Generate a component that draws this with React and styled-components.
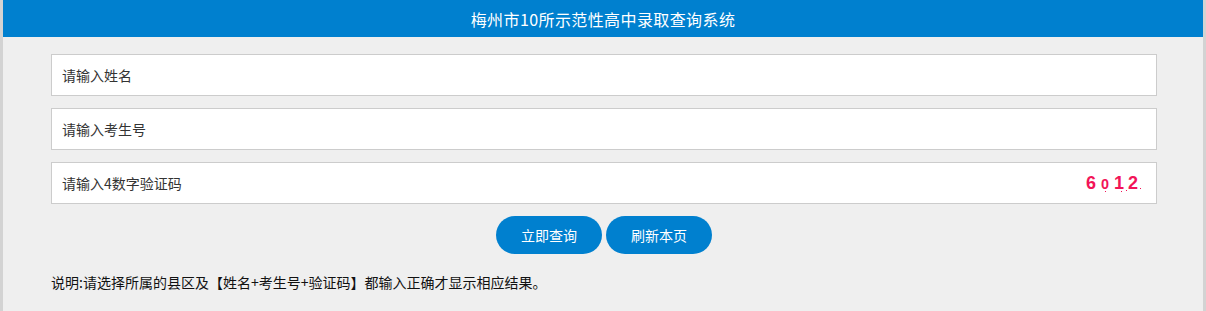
import styled, { createGlobalStyle } from "styled-components";

const GlobalStyle = createGlobalStyle`
  html, body {
    margin: 0;
    padding: 0;
    background: #efefef;
  }
  body {
    font-family: "Noto Sans CJK SC", "Noto Sans", sans-serif;
  }
`;

const Page = styled.div`
  height: 311px;
  background: #efefef;
  border-left: 3px solid #d3d3d3;
  border-right: 3px solid #d3d3d3;
  box-sizing: border-box;
`;

const Header = styled.div`
  height: 37px;
  background: #0080cf;
  color: #fff;
  display: flex;
  align-items: center;
  justify-content: center;
  font-size: 16px;
  letter-spacing: 0.4px;
`;

const Form = styled.div`
  padding: 17px 46px 0 48px;
  display: flex;
  flex-direction: column;
  gap: 12px;
`;

const Field = styled.div`
  height: 42px;
  box-sizing: border-box;
  background: #fff;
  border: 1px solid #cccccc;
  display: flex;
  align-items: center;
  padding: 0 10px;
`;

const Input = styled.input`
  flex: 1;
  border: none;
  outline: none;
  background: transparent;
  font-family: "Noto Sans CJK SC", "Noto Sans", sans-serif;
  font-size: 14px;
  color: #333;
  padding: 0;

  &::placeholder {
    color: #333;
  }
`;

const Captcha = styled.div`
  position: relative;
  display: flex;
  align-items: baseline;
  gap: 4px;
  margin-right: 5px;
  padding-right: 3px;
  color: #f21458;
  font-family: "Liberation Sans", Arial, sans-serif;
  font-weight: bold;
  font-size: 18px;
  line-height: 1;
`;

const Digit = styled.span`
  display: inline-block;
  transform: translateY(${(p) => p.$shift || 0}px)
    scale(${(p) => p.$sx || 1}, ${(p) => p.$sy || 1});
`;

const Speck = styled.i`
  position: absolute;
  width: 1px;
  height: 1px;
  background: #f21458;
`;

const Buttons = styled.div`
  display: flex;
  justify-content: center;
  gap: 4px;
`;

const Button = styled.button`
  width: 106px;
  height: 38px;
  border: none;
  border-radius: 19px;
  background: #0080cf;
  color: #fff;
  font-family: "Noto Sans CJK SC", "Noto Sans", sans-serif;
  font-size: 14px;
  cursor: pointer;
`;

const Note = styled.p`
  margin: 0;
  padding-top: 6px;
  font-size: 14px;
  color: #111;
  line-height: 20px;
`;

export default function App() {
  return (
    <Page>
      <GlobalStyle />
      <Header>梅州市10所示范性高中录取查询系统</Header>
      <Form>
        <Field>
          <Input placeholder="请输入姓名" />
        </Field>
        <Field>
          <Input placeholder="请输入考生号" />
        </Field>
        <Field>
          <Input placeholder="请输入4数字验证码" />
          <Captcha>
            <Digit>6</Digit>
            <Digit $sx={0.8} $sy={0.8} $shift={1}>0</Digit>
            <Digit>1</Digit>
            <Digit>2</Digit>
            <Speck style={{ left: 19, top: 17 }} />
            <Speck style={{ left: 35, top: 17 }} />
            <Speck style={{ left: 40, top: 16 }} />
            <Speck style={{ left: 54, top: 14 }} />
          </Captcha>
        </Field>
        <Buttons>
          <Button>立即查询</Button>
          <Button>刷新本页</Button>
        </Buttons>
        <Note>
          说明:请选择所属的县区及【姓名+考生号+验证码】都输入正确才显示相应结果。
        </Note>
      </Form>
    </Page>
  );
}
